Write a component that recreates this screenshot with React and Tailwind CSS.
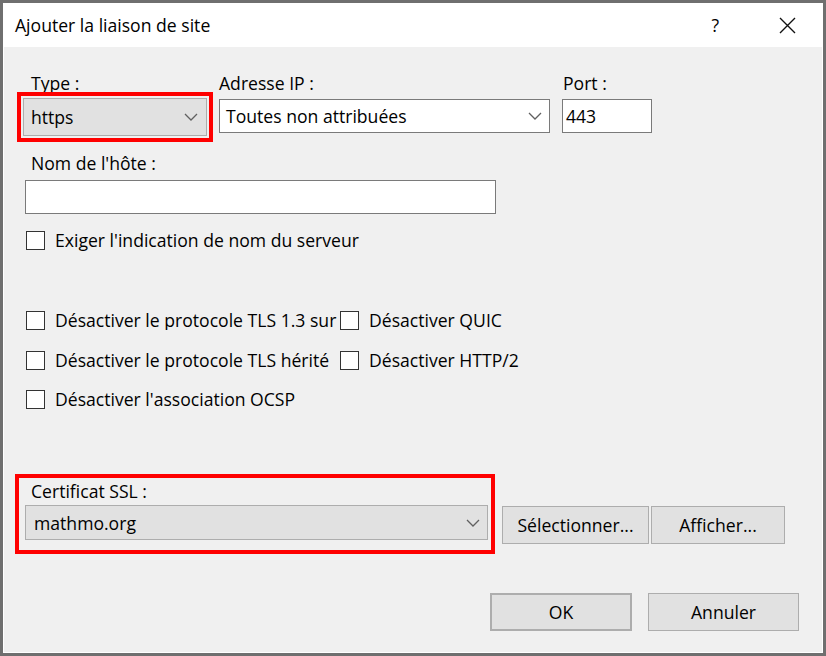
import React from 'react';

const Chevron = () => (
    <svg width="14" height="8" viewBox="0 0 14 8" className="shrink-0">
        <path d="M1 1 L7 7 L13 1" fill="none" stroke="#606060" strokeWidth="1.3" />
    </svg>
);

// clip -> the label is cut by the next column, like in the original dialog
const CheckBox = ({ label, width, clip }) => (
    <div className="flex items-center h-[20px] shrink-0" style={width ? { width } : undefined}>
        <div className="w-[19px] h-[19px] border border-[#333333] bg-white shrink-0" />
        <span className={`ml-[10px] whitespace-nowrap ${clip ? 'overflow-hidden' : ''}`}>{label}</span>
    </div>
);

const Button = ({ children, className = '' }) => (
    <div className={`h-[38px] flex items-center justify-center bg-[#e1e1e1] border border-[#adadad] ${className}`}>
        {children}
    </div>
);

export default function App() {
    return (
        <div
            className="w-[826px] h-[656px] bg-[#6f6f6f] p-[3px] text-black text-[17.6px] leading-[20px]"
            style={{ fontFamily: '"Open Sans", "Noto Sans", sans-serif' }}
        >
            <div className="w-full h-full flex flex-col bg-white border-l border-r border-b border-white">
                {/* title bar */}
                <div className="h-[44px] shrink-0 flex items-center bg-white">
                    <span className="ml-[11px]">Ajouter la liaison de site</span>
                    <span className="ml-auto mr-[60px]">?</span>
                    <svg width="17" height="17" viewBox="0 0 17 17" className="mr-[26px]">
                        <path d="M1 1 L16 16 M16 1 L1 16" stroke="#111" strokeWidth="1.4" />
                    </svg>
                </div>

                <div className="flex-1 flex flex-col bg-[#f0f0f0] pt-[26px]">
                    {/* type / ip / port */}
                    <div className="flex items-start ml-[13px]">
                        <div className="flex flex-col">
                            <span className="ml-[14px]">Type :</span>
                            <div className="mt-[-1px] w-[196px] h-[50px] border-4 border-[#ff0000] p-[2px]">
                                <div className="h-full flex items-center justify-between bg-[#e1e1e1] border border-[#adadad] pl-[7px] pr-[8px]">
                                    <span>https</span>
                                    <Chevron />
                                </div>
                            </div>
                        </div>
                        <div className="flex flex-col ml-[6px]">
                            <span>Adresse IP :</span>
                            <div className="mt-[6px] w-[331px] h-[34px] flex items-center justify-between bg-white border border-[#7a7a7a] pl-[6px] pr-[7px]">
                                <span>Toutes non attribuées</span>
                                <Chevron />
                            </div>
                        </div>
                        <div className="flex flex-col ml-[12px]">
                            <span className="ml-[1px]">Port :</span>
                            <div className="mt-[6px] w-[90px] h-[34px] flex items-center bg-white border border-[#7a7a7a] pl-[3px]">
                                443
                            </div>
                        </div>
                    </div>

                    {/* host name */}
                    <span className="mt-[11px] ml-[27px]">Nom de l'hôte :</span>
                    <div className="mt-[7px] ml-[21px] w-[471px] h-[34px] bg-white border border-[#7a7a7a]" />

                    <div className="mt-[16px] ml-[22px]">
                        <CheckBox label="Exiger l'indication de nom du serveur" />
                    </div>

                    {/* protocol options */}
                    <div className="mt-[60px] ml-[22px] flex flex-col gap-[20px]">
                        <div className="flex">
                            <CheckBox label="Désactiver le protocole TLS 1.3 sur TCP" width="314px" clip />
                            <CheckBox label="Désactiver QUIC" />
                        </div>
                        <div className="flex">
                            <CheckBox label="Désactiver le protocole TLS hérité" width="314px" />
                            <CheckBox label="Désactiver HTTP/2" />
                        </div>
                        <div className="flex -mt-[1px]">
                            <CheckBox label="Désactiver l'association OCSP" />
                        </div>
                    </div>

                    {/* certificate */}
                    <div className="mt-[65px] ml-[11px] flex items-start">
                        <div className="w-[480px] h-[80px] border-4 border-[#ff0000] flex flex-col">
                            <span className="mt-[3px] ml-[12px]">Certificat SSL :</span>
                            <div className="mt-[4px] ml-[6px] w-[463px] h-[35px] flex items-center justify-between bg-[#e1e1e1] border border-[#adadad] pl-[8px] pr-[7px]">
                                <span>mathmo.org</span>
                                <Chevron />
                            </div>
                        </div>
                        <div className="flex mt-[32px] ml-[7px] gap-[2px]">
                            <Button className="w-[147px]">Sélectionner...</Button>
                            <Button className="w-[134px]">Afficher...</Button>
                        </div>
                    </div>

                    {/* ok / cancel */}
                    <div className="mt-[39px] ml-[486px] flex gap-[16px]">
                        <Button className="w-[142px] border-2 border-[#0078d7]">OK</Button>
                        <Button className="w-[151px]">Annuler</Button>
                    </div>
                </div>
            </div>
        </div>
    );
}
